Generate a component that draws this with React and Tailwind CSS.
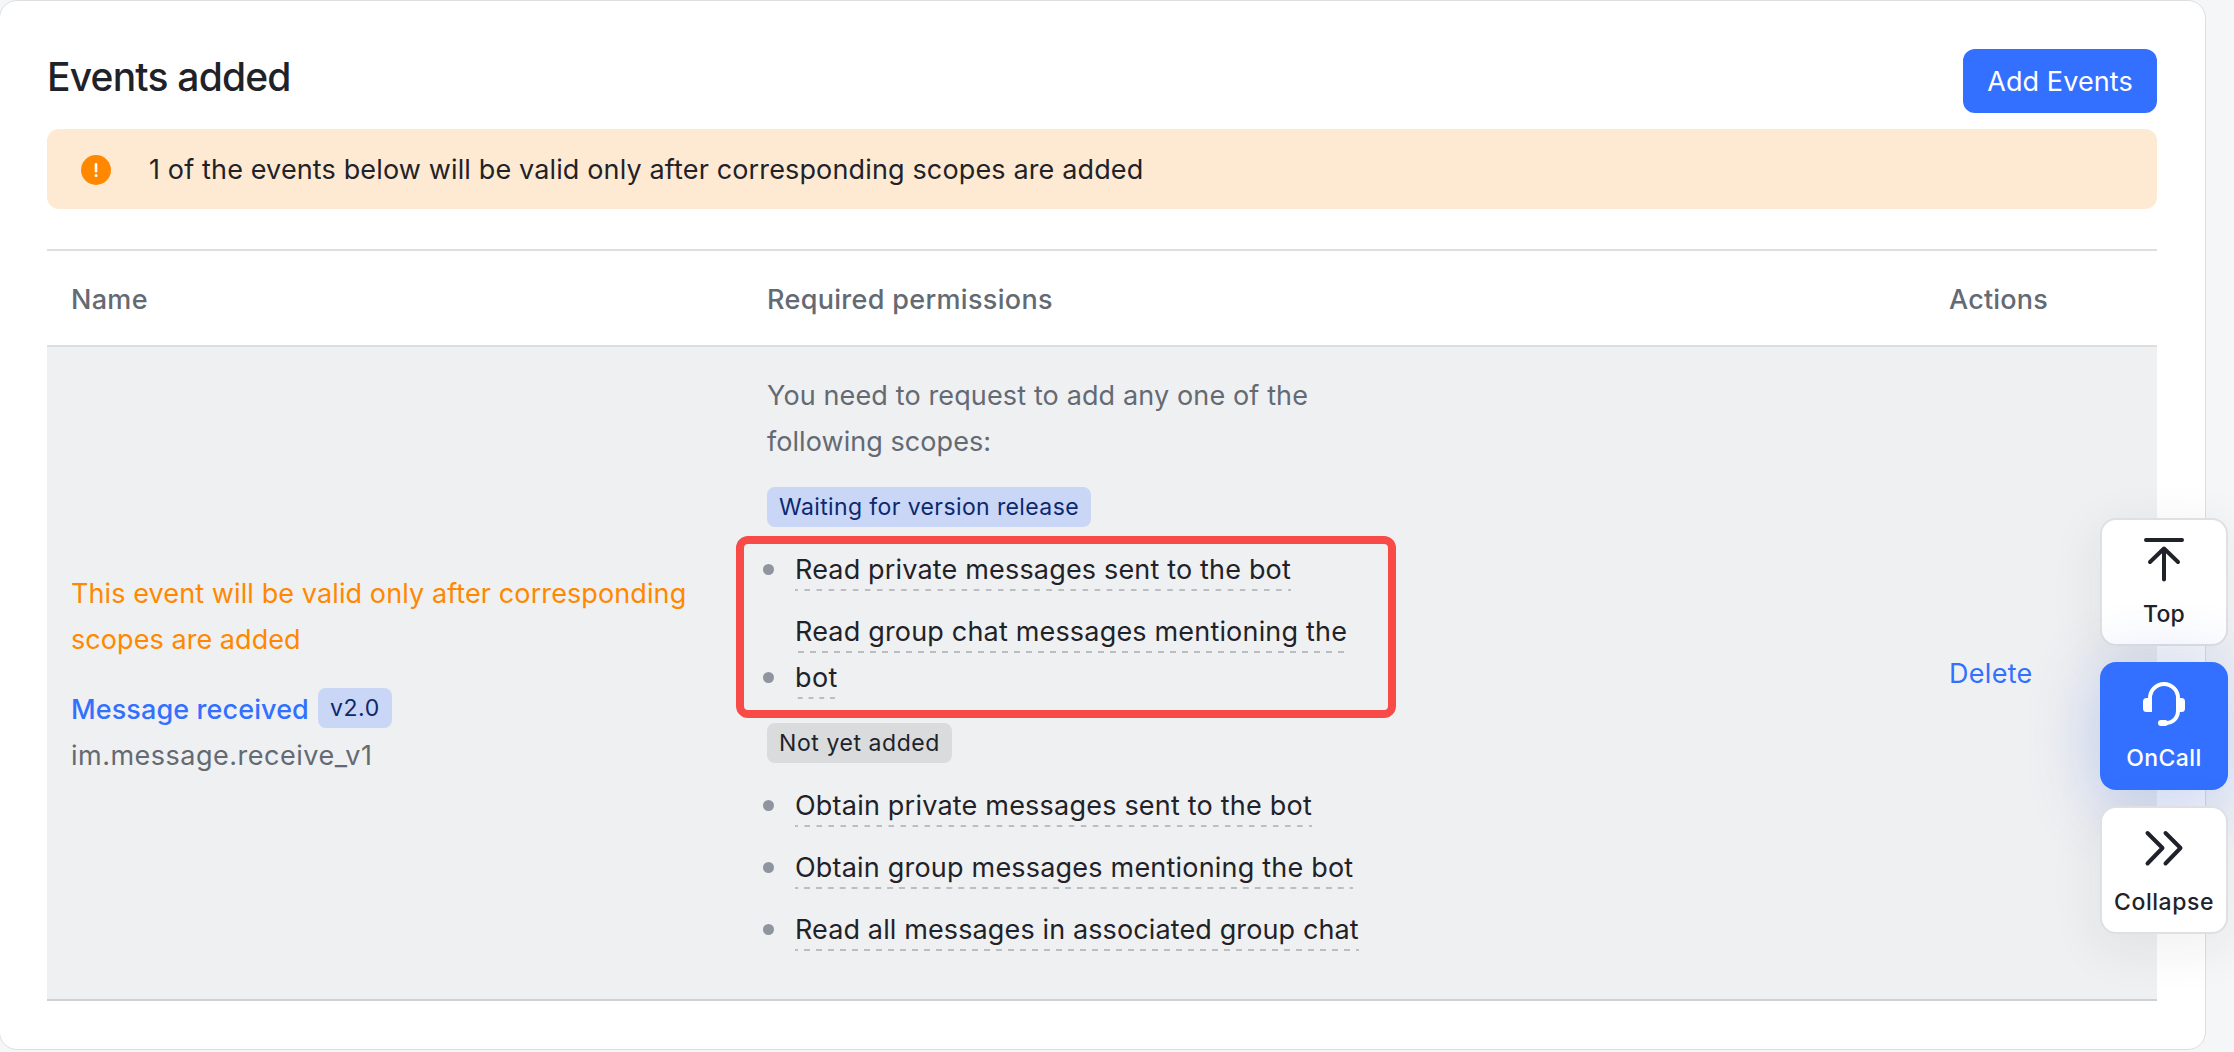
import React from "react";

function Tag({ children, className }) {
  return (
    <span className={`inline-block h-10 whitespace-nowrap rounded-lg px-3 text-[23px] leading-[40px] ${className}`}>
      {children}
    </span>
  );
}

function Scope({ lines }) {
  return (
    <li className="-ml-1 flex items-end gap-[21px]">
      <span className="mb-[17px] size-[11px] shrink-0 rounded-full bg-[#8f959e]" />
      <div className="-mb-px pt-px leading-[46px]">
        {lines.map(([text, tracking]) => (
          <div key={text} className="whitespace-nowrap">
            <span
              className={`bg-[linear-gradient(90deg,#bbbdc0_0_3px,transparent_3px_9px,#bbbdc0_9px_12px)] bg-[length:12px_2px] bg-bottom pb-[5px] [background-repeat:round_no-repeat] ${tracking}`}
            >
              {text}
            </span>
          </div>
        ))}
      </div>
    </li>
  );
}

function TopIcon() {
  return (
    <svg width="64" height="60" viewBox="0 0 64 60" fill="none" stroke="currentColor" strokeWidth="4" strokeLinecap="round" strokeLinejoin="round">
      <path d="M12 10H48M30 18.5V49.5M16 32L30 18.5L44 32" />
    </svg>
  );
}

function HeadsetIcon() {
  return (
    <svg width="64" height="60" viewBox="0 0 64 60" fill="none">
      <path d="M16 28V26a14 14 0 0 1 28 0V38.5C44 46 39 51 31 51.2" stroke="currentColor" strokeWidth="4" />
      <path d="M18 26V40H12.5A3.5 3.5 0 0 1 9 36.5V29.5A3.5 3.5 0 0 1 12.5 26Z" fill="currentColor" />
      <path d="M42.5 26H47.5A3.5 3.5 0 0 1 51 29.5V36.5A3.5 3.5 0 0 1 47.5 40H42.5Z" fill="currentColor" />
      <rect x="24" y="48" width="10" height="6" rx="3" fill="currentColor" />
    </svg>
  );
}

function CollapseIcon() {
  return (
    <svg width="64" height="60" viewBox="0 0 64 60" fill="none" stroke="currentColor" strokeWidth="4" strokeLinecap="round" strokeLinejoin="round">
      <path d="M13.5 15L28.5 30L13.5 45.5M31.5 15L46.5 30L31.5 45.5" />
    </svg>
  );
}

const waiting = [
  [["Read private messages sent to the bot", "tracking-[0.17px]"]],
  [
    ["Read group chat messages mentioning the", "tracking-[0.18px]"],
    ["bot", "tracking-[0.4px]"],
  ],
];

const missing = [
  [["Obtain private messages sent to the bot", "tracking-[0.21px]"]],
  [["Obtain group messages mentioning the bot", "tracking-[0.2px]"]],
  [["Read all messages in associated group chat", "tracking-[0.12px]"]],
];

export default function App() {
  return (
    <div className="relative h-[1052px] w-[2234px] overflow-hidden bg-[#f5f6f7] font-['Inter',sans-serif] text-[27px] text-[#1f2329]">
      <main className="-ml-px h-[1050px] w-[2207px] rounded-[18px] border border-[#dcdee0] bg-white px-12 pl-[47px] pt-12">
        <header className="flex h-16 w-[2110px] items-center justify-between">
          <h1 className="-mt-2 whitespace-nowrap text-[39px] font-medium leading-[56px] tracking-[-0.8px]">Events added</h1>
          <button className="h-16 w-[194px] whitespace-nowrap rounded-xl bg-[#3370ff] pt-0.5 text-center tracking-[0.08px] text-white">
            Add Events
          </button>
        </header>

        <div className="mt-4 flex h-20 w-[2110px] items-center rounded-xl bg-[#feead2] pl-[34px]">
          <svg className="mt-0.5" width="30" height="30" viewBox="0 0 30 30">
            <circle cx="15" cy="15" r="15" fill="#ff8800" />
            <path d="M15 9.2V16.2" stroke="white" strokeWidth="2.6" strokeLinecap="round" />
            <circle cx="15" cy="20.6" r="1.5" fill="white" />
          </svg>
          <span className="ml-[38px] whitespace-nowrap pt-0.5 tracking-[0.14px]">
            1 of the events below will be valid only after corresponding scopes are added
          </span>
        </div>

        <section className="mt-10 w-[2110px]">
          <div className="grid h-[98px] grid-cols-[696px_1182px_232px] items-center border-y-2 border-[#dddedf] pt-1 font-medium text-[#646a73]">
            <div className="pl-6 tracking-[0.3px]">Name</div>
            <div className="pl-6 tracking-[0.32px]">Required permissions</div>
            <div className="pl-6 tracking-[0.2px]">Actions</div>
          </div>

          <div className="grid h-[654px] grid-cols-[696px_1182px_232px] border-b-2 border-[#cfd1d3] bg-[#eff0f1] leading-[46px]">
            <div className="self-center whitespace-nowrap pl-6 pt-1">
              <p className="text-[#ff8800]">
                <span className="tracking-[0.1px]">This event will be valid only after corresponding</span>
                <br />
                <span className="tracking-[0.06px]">scopes are added</span>
              </p>
              <div className="mt-6 flex h-[46px] items-center gap-[9px]">
                <a className="font-medium tracking-[0.1px] text-[#3370ff]">Message received</a>
                <Tag className="-mt-1 bg-[#c9d6f6] tracking-[0.6px] text-[#0c296e]">v2.0</Tag>
              </div>
              <p className="tracking-[0.5px] text-[#646a73]">im.message.receive_v1</p>
            </div>

            <div className="pl-6 pt-[26px]">
              <p className="whitespace-nowrap text-[#646a73]">
                <span className="tracking-[0.13px]">You need to request to add any one of the</span>
                <br />
                <span className="tracking-[0.06px]">following scopes:</span>
              </p>
              <div className="relative mt-[22px] flex flex-col items-start">
                <Tag className="bg-[#c9d6f6] tracking-[0.39px] text-[#0c296e]">Waiting for version release</Tag>
                <ul className="mt-[19px] flex flex-col gap-4">
                  {waiting.map((lines) => (
                    <Scope key={lines[0][0]} lines={lines} />
                  ))}
                </ul>
                <div className="absolute -left-[31px] top-[49px] h-[182px] w-[660px] rounded-xl border-8 border-[#f84b48]" />
              </div>
              <div className="mt-[23px] flex flex-col items-start">
                <Tag className="bg-[#dadbdd] tracking-[0.57px]">Not yet added</Tag>
                <ul className="mt-[19px] flex flex-col gap-4">
                  {missing.map((lines) => (
                    <Scope key={lines[0][0]} lines={lines} />
                  ))}
                </ul>
              </div>
            </div>

            <div className="self-center pl-6 pt-0.5">
              <a className="tracking-[0.3px] text-[#3370ff]">Delete</a>
            </div>
          </div>
        </section>
      </main>

      <nav className="absolute left-[2100px] top-[518px] flex w-32 flex-col gap-4 text-[23px] font-medium leading-[30px]">
        <button className="flex h-32 flex-col items-center rounded-2xl border-2 border-[#dee0e3] bg-white pt-2.5 shadow-[0_12px_48px_8px_rgba(31,35,41,0.06)]">
          <span className="ml-1"><TopIcon /></span>
          <span className="mt-[9px] tracking-[0.2px]">Top</span>
        </button>
        <button className="flex h-32 flex-col items-center rounded-2xl bg-[#3370ff] pt-2.5 text-white shadow-[0_12px_64px_8px_rgba(51,95,220,0.24)]">
          <span className="ml-1"><HeadsetIcon /></span>
          <span className="mt-[11px] tracking-[0.45px]">OnCall</span>
        </button>
        <button className="flex h-32 flex-col items-center rounded-2xl border-2 border-[#dee0e3] bg-white pt-2.5 shadow-[0_12px_48px_8px_rgba(31,35,41,0.06)]">
          <span className="ml-1"><CollapseIcon /></span>
          <span className="mt-[9px] tracking-[0.55px]">Collapse</span>
        </button>
      </nav>
    </div>
  );
}
